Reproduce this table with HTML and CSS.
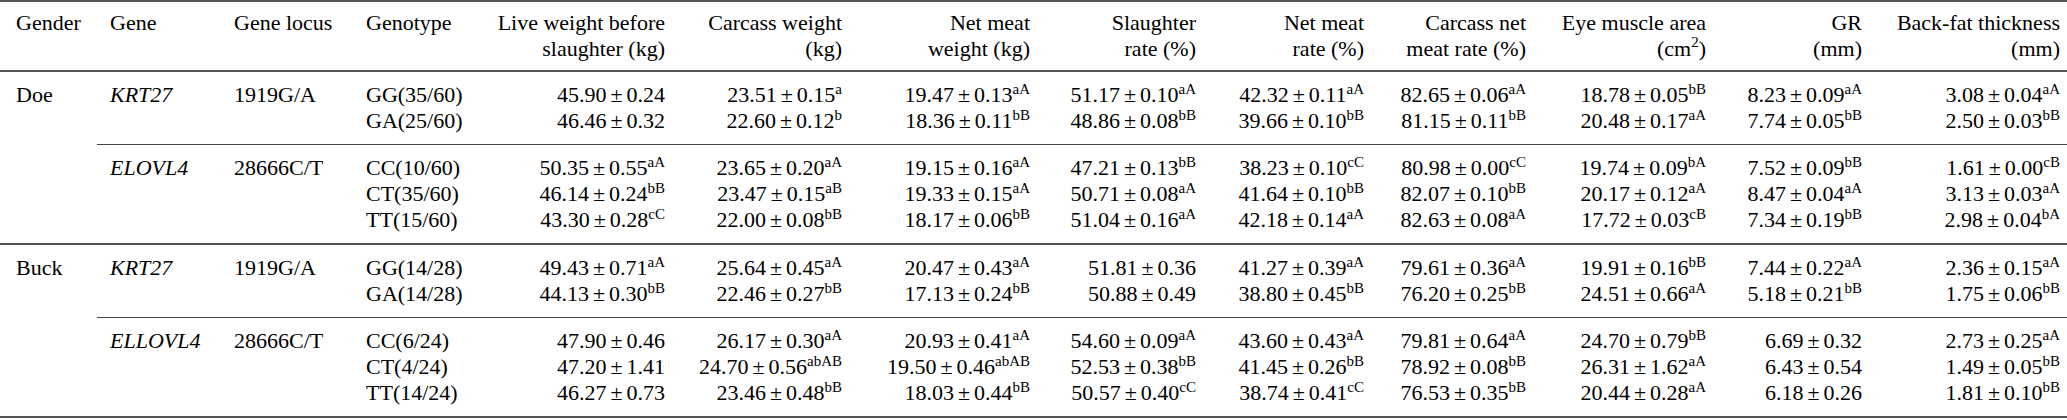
FILE: index.html
```html
<!DOCTYPE html>
<html>
<head>
<meta charset="utf-8">
<link rel="stylesheet" href="styles.css">
</head>
<body>
<table class="tbl">
<colgroup>
<col class="c1"><col class="c2"><col class="c3"><col class="c4"><col class="c5"><col class="c6"><col class="c7"><col class="c8"><col class="c9"><col class="c10"><col class="c11"><col class="c12"><col class="c13">
</colgroup>
<thead>
<tr>
<th class="l first-col">Gender</th>
<th class="l">Gene</th>
<th class="l">Gene locus</th>
<th class="l">Genotype</th>
<th class="r">Live weight before<br>slaughter (kg)</th>
<th class="r">Carcass weight<br>(kg)</th>
<th class="r">Net meat<br>weight (kg)</th>
<th class="r">Slaughter<br>rate (%)</th>
<th class="r">Net meat<br>rate (%)</th>
<th class="r">Carcass net<br>meat rate (%)</th>
<th class="r">Eye muscle area<br>(cm<sup class="unit">2</sup>)</th>
<th class="r">GR<br>(mm)</th>
<th class="r last-col">Back-fat thickness<br>(mm)</th>
</tr>
</thead>
<tbody>
<tr class="first">
<td class="l first-col" rowspan="5">Doe</td>
<td class="l gene" rowspan="2">KRT27</td>
<td class="l" rowspan="2">1919G/A</td>
<td class="l">GG(35/60)</td>
<td class="r">45.90 ± 0.24</td>
<td class="r">23.51 ± 0.15<sup>a</sup></td>
<td class="r">19.47 ± 0.13<sup>aA</sup></td>
<td class="r">51.17 ± 0.10<sup>aA</sup></td>
<td class="r">42.32 ± 0.11<sup>aA</sup></td>
<td class="r">82.65 ± 0.06<sup>aA</sup></td>
<td class="r">18.78 ± 0.05<sup>bB</sup></td>
<td class="r">8.23 ± 0.09<sup>aA</sup></td>
<td class="r last-col">3.08 ± 0.04<sup>aA</sup></td>
</tr>
<tr class="last">
<td class="l">GA(25/60)</td>
<td class="r">46.46 ± 0.32</td>
<td class="r">22.60 ± 0.12<sup>b</sup></td>
<td class="r">18.36 ± 0.11<sup>bB</sup></td>
<td class="r">48.86 ± 0.08<sup>bB</sup></td>
<td class="r">39.66 ± 0.10<sup>bB</sup></td>
<td class="r">81.15 ± 0.11<sup>bB</sup></td>
<td class="r">20.48 ± 0.17<sup>aA</sup></td>
<td class="r">7.74 ± 0.05<sup>bB</sup></td>
<td class="r last-col">2.50 ± 0.03<sup>bB</sup></td>
</tr>
<tr class="first sub">
<td class="l gene" rowspan="3">ELOVL4</td>
<td class="l" rowspan="3">28666C/T</td>
<td class="l">CC(10/60)</td>
<td class="r">50.35 ± 0.55<sup>aA</sup></td>
<td class="r">23.65 ± 0.20<sup>aA</sup></td>
<td class="r">19.15 ± 0.16<sup>aA</sup></td>
<td class="r">47.21 ± 0.13<sup>bB</sup></td>
<td class="r">38.23 ± 0.10<sup>cC</sup></td>
<td class="r">80.98 ± 0.00<sup>cC</sup></td>
<td class="r">19.74 ± 0.09<sup>bA</sup></td>
<td class="r">7.52 ± 0.09<sup>bB</sup></td>
<td class="r last-col">1.61 ± 0.00<sup>cB</sup></td>
</tr>
<tr>
<td class="l">CT(35/60)</td>
<td class="r">46.14 ± 0.24<sup>bB</sup></td>
<td class="r">23.47 ± 0.15<sup>aB</sup></td>
<td class="r">19.33 ± 0.15<sup>aA</sup></td>
<td class="r">50.71 ± 0.08<sup>aA</sup></td>
<td class="r">41.64 ± 0.10<sup>bB</sup></td>
<td class="r">82.07 ± 0.10<sup>bB</sup></td>
<td class="r">20.17 ± 0.12<sup>aA</sup></td>
<td class="r">8.47 ± 0.04<sup>aA</sup></td>
<td class="r last-col">3.13 ± 0.03<sup>aA</sup></td>
</tr>
<tr class="last">
<td class="l">TT(15/60)</td>
<td class="r">43.30 ± 0.28<sup>cC</sup></td>
<td class="r">22.00 ± 0.08<sup>bB</sup></td>
<td class="r">18.17 ± 0.06<sup>bB</sup></td>
<td class="r">51.04 ± 0.16<sup>aA</sup></td>
<td class="r">42.18 ± 0.14<sup>aA</sup></td>
<td class="r">82.63 ± 0.08<sup>aA</sup></td>
<td class="r">17.72 ± 0.03<sup>cB</sup></td>
<td class="r">7.34 ± 0.19<sup>bB</sup></td>
<td class="r last-col">2.98 ± 0.04<sup>bA</sup></td>
</tr>
<tr class="first full">
<td class="l first-col" rowspan="5">Buck</td>
<td class="l gene" rowspan="2">KRT27</td>
<td class="l" rowspan="2">1919G/A</td>
<td class="l">GG(14/28)</td>
<td class="r">49.43 ± 0.71<sup>aA</sup></td>
<td class="r">25.64 ± 0.45<sup>aA</sup></td>
<td class="r">20.47 ± 0.43<sup>aA</sup></td>
<td class="r">51.81 ± 0.36</td>
<td class="r">41.27 ± 0.39<sup>aA</sup></td>
<td class="r">79.61 ± 0.36<sup>aA</sup></td>
<td class="r">19.91 ± 0.16<sup>bB</sup></td>
<td class="r">7.44 ± 0.22<sup>aA</sup></td>
<td class="r last-col">2.36 ± 0.15<sup>aA</sup></td>
</tr>
<tr class="last">
<td class="l">GA(14/28)</td>
<td class="r">44.13 ± 0.30<sup>bB</sup></td>
<td class="r">22.46 ± 0.27<sup>bB</sup></td>
<td class="r">17.13 ± 0.24<sup>bB</sup></td>
<td class="r">50.88 ± 0.49</td>
<td class="r">38.80 ± 0.45<sup>bB</sup></td>
<td class="r">76.20 ± 0.25<sup>bB</sup></td>
<td class="r">24.51 ± 0.66<sup>aA</sup></td>
<td class="r">5.18 ± 0.21<sup>bB</sup></td>
<td class="r last-col">1.75 ± 0.06<sup>bB</sup></td>
</tr>
<tr class="first sub">
<td class="l gene" rowspan="3">ELLOVL4</td>
<td class="l" rowspan="3">28666C/T</td>
<td class="l">CC(6/24)</td>
<td class="r">47.90 ± 0.46</td>
<td class="r">26.17 ± 0.30<sup>aA</sup></td>
<td class="r">20.93 ± 0.41<sup>aA</sup></td>
<td class="r">54.60 ± 0.09<sup>aA</sup></td>
<td class="r">43.60 ± 0.43<sup>aA</sup></td>
<td class="r">79.81 ± 0.64<sup>aA</sup></td>
<td class="r">24.70 ± 0.79<sup>bB</sup></td>
<td class="r">6.69 ± 0.32</td>
<td class="r last-col">2.73 ± 0.25<sup>aA</sup></td>
</tr>
<tr>
<td class="l">CT(4/24)</td>
<td class="r">47.20 ± 1.41</td>
<td class="r">24.70 ± 0.56<sup>abAB</sup></td>
<td class="r">19.50 ± 0.46<sup>abAB</sup></td>
<td class="r">52.53 ± 0.38<sup>bB</sup></td>
<td class="r">41.45 ± 0.26<sup>bB</sup></td>
<td class="r">78.92 ± 0.08<sup>bB</sup></td>
<td class="r">26.31 ± 1.62<sup>aA</sup></td>
<td class="r">6.43 ± 0.54</td>
<td class="r last-col">1.49 ± 0.05<sup>bB</sup></td>
</tr>
<tr class="last">
<td class="l">TT(14/24)</td>
<td class="r">46.27 ± 0.73</td>
<td class="r">23.46 ± 0.48<sup>bB</sup></td>
<td class="r">18.03 ± 0.44<sup>bB</sup></td>
<td class="r">50.57 ± 0.40<sup>cC</sup></td>
<td class="r">38.74 ± 0.41<sup>cC</sup></td>
<td class="r">76.53 ± 0.35<sup>bB</sup></td>
<td class="r">20.44 ± 0.28<sup>aA</sup></td>
<td class="r">6.18 ± 0.26</td>
<td class="r last-col">1.81 ± 0.10<sup>bB</sup></td>
</tr>
</tbody>
</table>
</body>
</html>
```

FILE: styles.css
```css
html, body {
  margin: 0;
  padding: 0;
  background: #ffffff;
}

.tbl {
  width: 2067px;
  table-layout: fixed;
  border-collapse: collapse;
  font-family: "Liberation Serif", "Times New Roman", serif;
  font-size: 22px;
  line-height: 26px;
  color: #000000;
  border-top: 2px solid #555555;
  border-bottom: 2px solid #555555;
}

.c1 { width: 97px; }
.c2 { width: 124px; }
.c3 { width: 132px; }
.c4 { width: 122px; }
.c5 { width: 196px; }
.c6 { width: 177px; }
.c7 { width: 188px; }
.c8 { width: 166px; }
.c9 { width: 168px; }
.c10 { width: 162px; }
.c11 { width: 180px; }
.c12 { width: 156px; }
.c13 { width: 199px; }

.tbl th {
  font-weight: normal;
  vertical-align: top;
  padding: 8px 6px 8px 6px;
  white-space: nowrap;
  border-bottom: 2px solid #555555;
}

.tbl td {
  vertical-align: top;
  padding: 0 6px;
  white-space: nowrap;
}

.tbl .l { text-align: left; padding-left: 13px; }
.tbl .r { text-align: right; padding-right: 6px; }
.tbl .first-col { padding-left: 16px; }
.tbl .last-col { padding-right: 7px; }

.tbl td.r { word-spacing: -1.5px; }

.gene { font-style: italic; }

.tbl tr.first td { padding-top: 10px; }
.tbl tr.last td { padding-bottom: 10px; }

.tbl tr.sub td { border-top: 1px solid #444444; }
.tbl tr.full td { border-top: 2px solid #555555; }

.tbl sup {
  font-size: 15px;
  line-height: 0;
  vertical-align: 8px;
  word-spacing: 0;
}

.tbl sup.unit {
  vertical-align: 9px;
}
```
